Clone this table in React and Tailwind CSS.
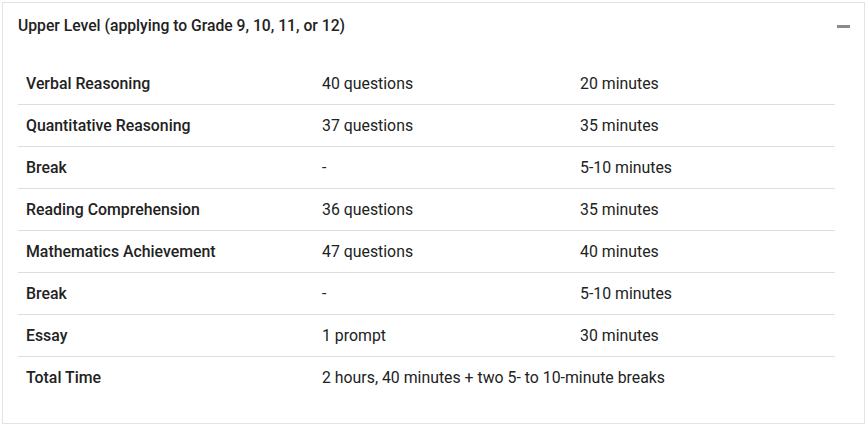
const rows = [
  { name: "Verbal Reasoning", count: "40 questions", time: "20 minutes" },
  { name: "Quantitative Reasoning", count: "37 questions", time: "35 minutes" },
  { name: "Break", count: "-", time: "5-10 minutes" },
  { name: "Reading Comprehension", count: "36 questions", time: "35 minutes" },
  { name: "Mathematics Achievement", count: "47 questions", time: "40 minutes" },
  { name: "Break", count: "-", time: "5-10 minutes" },
  { name: "Essay", count: "1 prompt", time: "30 minutes" },
];

export default function App() {
  return (
    <div className="p-[2px] bg-white" style={{ fontFamily: "Roboto, 'Liberation Sans', sans-serif" }}>
      <div className="w-[863px] h-[422px] border border-[#e3e3e3] bg-white text-[#222]">
        <div className="flex h-[46px] items-center justify-between pl-[15px] pr-[14px]">
          <h3 className="text-[15.7px] font-medium">Upper Level (applying to Grade 9, 10, 11, or 12)</h3>
          <span className="block h-[3px] w-[13px] bg-[#8a8a8a]" />
        </div>

        <table className="ml-[15px] mt-[13px] w-[817px] border-collapse text-[15.85px]">
          <colgroup>
            <col className="w-[296px]" />
            <col className="w-[258px]" />
            <col className="w-[263px]" />
          </colgroup>
          <tbody>
            {rows.map((row, i) => (
              <tr key={i} className="h-[42px] border-b border-[#dedede]">
                <td className="px-2 pt-[2px] font-medium">{row.name}</td>
                <td className="px-2 pt-[2px]">{row.count}</td>
                <td className="px-2 pt-[2px]">{row.time}</td>
              </tr>
            ))}
            <tr className="h-[42px]">
              <td className="px-2 pt-[2px] font-medium">Total Time</td>
              <td className="px-2 pt-[2px]" colSpan={2}>2 hours, 40 minutes + two 5- to 10-minute breaks</td>
            </tr>
          </tbody>
        </table>
      </div>
    </div>
  );
}
